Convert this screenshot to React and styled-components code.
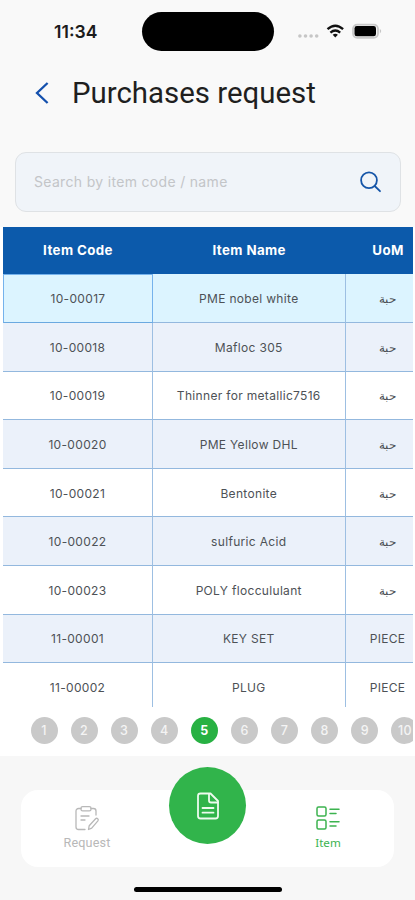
import styled, { createGlobalStyle } from "styled-components";

const GlobalStyle = createGlobalStyle`
    *, *::before, *::after {
        box-sizing: border-box;
    }
    body {
        margin: 0;
        background: #f9f9f9;
        font-family: Inter, "Noto Sans", sans-serif;
    }
`

const Screen = styled.div`
    display: flex;
    flex-direction: column;
    width: 415px;
    height: 900px;
    overflow: hidden;
    background: #f9f9f9;
`

const StatusBar = styled.div`
    display: flex;
    flex: none;
    align-items: flex-start;
    height: 62px;
    padding: 12px 0 0 54px;
`

const Clock = styled.span`
    flex: none;
    width: 88px;
    padding-top: 8px;
    font-size: 17.6px;
    font-weight: 600;
    line-height: 24px;
    letter-spacing: 0;
    color: #1c1c1c;
`

const Island = styled.div`
    flex: none;
    width: 132px;
    height: 39px;
    border-radius: 20px;
    background: #000;
`

const StatusIcons = styled.svg`
    display: block;
    flex: none;
    width: 88px;
    height: 22px;
    margin: 8px 0 0 22px;
`

const Header = styled.header`
    display: flex;
    flex: none;
    align-items: center;
    height: 62px;
    padding-left: 34px;
`

const BackIcon = styled.svg`
    width: 16px;
    height: 24px;
    margin-right: 22px;
`

const Title = styled.h1`
    margin: 0;
    font-family: Roboto, sans-serif;
    font-size: 29.4px;
    font-weight: 400;
    line-height: 36px;
    letter-spacing: 0;
    color: #1f1f1f;
`

const SearchBox = styled.div`
    display: flex;
    flex: none;
    align-items: center;
    justify-content: space-between;
    width: 386px;
    height: 60px;
    margin: 28px 0 15px 15px;
    padding: 0 17px 0 18px;
    border: 1px solid #dfe2e5;
    border-radius: 11px;
    background: #f0f4f9;
`

const SearchInput = styled.input`
    width: 260px;
    padding: 0 0 1px;
    border: 0;
    outline: 0;
    background: transparent;
    font-family: Inter, sans-serif;
    font-size: 14px;
    letter-spacing: 0.32px;
    color: #333;

    &::placeholder {
        color: #c3c5c8;
        opacity: 1;
    }
`

const SearchIcon = styled.svg`
    width: 24px;
    height: 24px;
`

const Content = styled.main`
    flex: none;
    height: 529px;
    padding: 0 2px 0 3px;
    background: #fff;
`

const Table = styled.div`
    height: 480px;
    overflow: hidden;
`

const Row = styled.div`
    display: grid;
    grid-template-columns: 150px 192.5px 85px;
    width: 427.5px;
    height: 48.6px;
    background: ${ props => props.$selected ? '#dcf4ff' : props.$shaded ? '#ebf1fa' : '#fff' };
`

const HeadRow = styled(Row)`
    height: 47.4px;
    background: #0c5aab;
`

const HeadCell = styled.div`
    display: flex;
    align-items: center;
    justify-content: center;
    padding-bottom: 1px;
    font-size: 13.3px;
    font-weight: 700;
    letter-spacing: 0.4px;
    color: #fff;
`

const Cell = styled.div`
    display: flex;
    align-items: center;
    justify-content: center;
    padding-top: 1px;
    border-right: 1px solid #9dbfe2;
    border-bottom: 1px solid #93b8de;
    font-size: 12px;
    letter-spacing: 0.32px;
    color: #4d5156;
    white-space: nowrap;
    ${ props => props.$active && `
        padding-top: 0;
        border: 1px solid #75b2ec;
        border-bottom-color: #6aa9e0;
    ` }
`

const Pager = styled.div`
    display: flex;
    gap: 13.1px;
    padding: 10px 0 0 27.5px;
    overflow: hidden;
`

const Page = styled.div`
    display: flex;
    flex: none;
    align-items: center;
    justify-content: center;
    width: 27px;
    height: 27px;
    border-radius: 50%;
    background: ${ props => props.$current ? '#28b143' : '#c9c9c9' };
    font-size: 12.5px;
    font-weight: ${ props => props.$current ? 700 : 500 };
    letter-spacing: 0.3px;
    color: ${ props => props.$current ? '#fff' : '#f4f4f4' };
`

const Footer = styled.footer`
    display: flex;
    flex-direction: column;
    align-items: center;
    height: 144px;
    padding-top: 34px;
    background: #f7f7f7;
`

const NavBar = styled.nav`
    position: relative;
    display: flex;
    justify-content: space-between;
    width: 373px;
    height: 77px;
    padding: 0 26px 0 26px;
    border-radius: 17px;
    background: #fff;
`

const NavItem = styled.div`
    display: flex;
    flex-direction: column;
    align-items: center;
    width: 80px;
    padding-top: 14px;
    font-family: ${ props => props.$active ? '"Noto Sans"' : 'Roboto' }, sans-serif;
    font-size: ${ props => props.$active ? '11.6px' : '12.6px' };
    line-height: 16px;
    letter-spacing: ${ props => props.$active ? '0' : '0.15px' };
    color: ${ props => props.$active ? '#3cb34f' : '#b8b8b8' };

    svg {
        width: 28px;
        height: 28px;
        margin-bottom: 3px;
    }
`

const AddButton = styled.div`
    position: absolute;
    top: -23px;
    left: 148px;
    display: flex;
    align-items: center;
    justify-content: center;
    width: 77px;
    height: 77px;
    border-radius: 50%;
    background: #31b44b;
`

const HomeIndicator = styled.div`
    width: 148px;
    height: 5px;
    margin-top: 20px;
    border-radius: 3px;
    background: #000;
`

const items = [
    { code: '10-00017', name: 'PME nobel white', uom: 'حبة' },
    { code: '10-00018', name: 'Mafloc 305', uom: 'حبة' },
    { code: '10-00019', name: 'Thinner for metallic7516', uom: 'حبة' },
    { code: '10-00020', name: 'PME Yellow DHL', uom: 'حبة' },
    { code: '10-00021', name: 'Bentonite', uom: 'حبة' },
    { code: '10-00022', name: 'sulfuric Acid', uom: 'حبة' },
    { code: '10-00023', name: 'POLY floccululant', uom: 'حبة' },
    { code: '11-00001', name: 'KEY SET', uom: 'PIECE' },
    { code: '11-00002', name: 'PLUG', uom: 'PIECE' },
]

const pages = [ 1, 2, 3, 4, 5, 6, 7, 8, 9, 10 ]

function Status() {
    return (
        <StatusBar>
            <Clock>11:34</Clock>
            <Island />
            <StatusIcons viewBox="0 0 88 22">
                <g fill="#c6c6c6">
                    <circle cx="3.9" cy="16" r="1.8" />
                    <circle cx="9.5" cy="16" r="1.8" />
                    <circle cx="15.1" cy="16" r="1.8" />
                    <circle cx="20.7" cy="16" r="1.8" />
                </g>
                <g fill="none" stroke="#111" strokeWidth="2.3">
                    <path d="M31.5 9.2 Q39.3 2.2 47.1 9.2" />
                    <path d="M34.4 12.6 Q39.3 8.3 44.2 12.6" />
                </g>
                <path d="M36.7 14.7 Q39.3 12.8 41.9 14.7 L39.3 17.5Z" fill="#111" />
                <rect x="57" y="4.6" width="25" height="13.2" rx="4.2" fill="#f4f4f4" stroke="#c9c9c9" strokeWidth="1.8" />
                <rect x="58.5" y="6" width="21.5" height="10.3" rx="2.4" fill="#000" />
                <path d="M83.8 8.8 Q86.6 11.1 83.8 13.4Z" fill="#c6c6c6" />
            </StatusIcons>
        </StatusBar>
    );
}

function ItemTable() {
    return (
        <Table>
            <HeadRow>
                <HeadCell>Item Code</HeadCell>
                <HeadCell>Item Name</HeadCell>
                <HeadCell>UoM</HeadCell>
            </HeadRow>
            { items.map( ( item, i ) => (
                <Row key={ item.code } $selected={ i === 0 } $shaded={ i % 2 === 1 }>
                    <Cell $active={ i === 0 }>{ item.code }</Cell>
                    <Cell>{ item.name }</Cell>
                    <Cell>{ item.uom }</Cell>
                </Row>
            ) ) }
        </Table>
    );
}

function BottomNav() {
    return (
        <NavBar>
            <NavItem>
                <svg viewBox="0 0 28 28" fill="none" stroke="#b8b8b8" strokeWidth="1.3" strokeLinecap="round" strokeLinejoin="round">
                    <path d="M8 4.5H5.5a2.5 2.5 0 0 0-2.5 2.5v16a2.5 2.5 0 0 0 2.5 2.5H12M18 4.5h2.5A2.5 2.5 0 0 1 23 7v4" />
                    <rect x="8" y="2.6" width="10" height="4.2" rx="1.6" />
                    <path d="M8 12h8M8 16h4" />
                    <path d="M15.5 25.5l.7-3.8 6.4-7a1.6 1.6 0 0 1 2.3 2.2l-6.2 7.2z" />
                </svg>
                Request
            </NavItem>
            <NavItem $active>
                <svg viewBox="0 0 28 28" fill="none" stroke="#3cb34f" strokeWidth="1.5" strokeLinecap="round">
                    <rect x="3" y="3" width="9" height="9" rx="1.5" />
                    <rect x="3" y="16" width="9" height="9" rx="1.5" />
                    <path d="M16 5.2h9M16 9.4h6M16 17.7h9M16 21.9h6" />
                </svg>
                Item
            </NavItem>
            <AddButton>
                <svg width="24" height="28" viewBox="0 0 24 28" fill="none" stroke="#eefbef" strokeWidth="1.8" strokeLinejoin="round" strokeLinecap="round">
                    <path d="M14.5 1.5H4.5a2.5 2.5 0 0 0-2.5 2.5v20a2.5 2.5 0 0 0 2.5 2.5h15a2.5 2.5 0 0 0 2.5-2.5V9z" />
                    <path d="M13 2v6.5a2 2 0 0 0 2 2H22M6.5 16h11M6.5 20.7h11" />
                </svg>
            </AddButton>
        </NavBar>
    );
}

function App() {
    return (
        <>
            <GlobalStyle />
            <Screen>
                <Status />
                <Header>
                    <BackIcon viewBox="0 0 16 24" fill="none" stroke="#1450ad" strokeWidth="2.3">
                        <path d="M13.6 2 L3 12 L13.6 22" />
                    </BackIcon>
                    <Title>Purchases request</Title>
                </Header>
                <SearchBox>
                    <SearchInput placeholder="Search by item code / name" />
                    <SearchIcon viewBox="0 0 24 24" fill="none" stroke="#1555a8" strokeWidth="1.8" strokeLinecap="round">
                        <circle cx="10" cy="10.2" r="7.9" />
                        <path d="M15.7 16 L21 21.2" />
                    </SearchIcon>
                </SearchBox>
                <Content>
                    <ItemTable />
                    <Pager>
                        { pages.map( page => (
                            <Page key={ page } $current={ page === 5 }>{ page }</Page>
                        ) ) }
                    </Pager>
                </Content>
                <Footer>
                    <BottomNav />
                    <HomeIndicator />
                </Footer>
            </Screen>
        </>
    );
}

export default App;
